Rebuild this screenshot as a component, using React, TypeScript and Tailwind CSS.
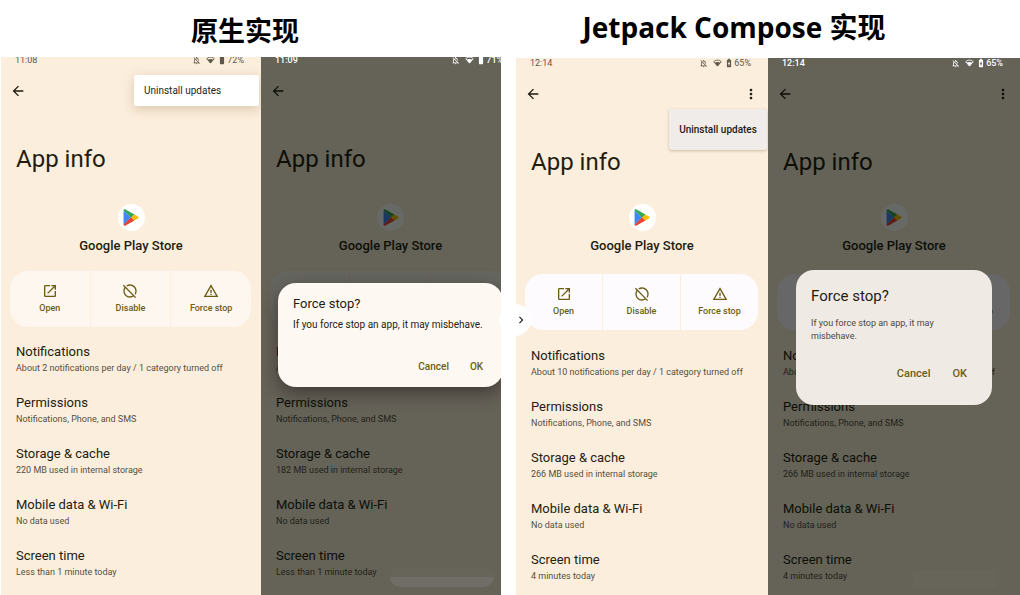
import React from "react";
import {
  MdArrowBack,
  MdBatteryChargingFull,
  MdBatteryFull,
  MdChevronRight,
  MdHideSource,
  MdMoreVert,
  MdOpenInNew,
  MdOutlineNotificationsOff,
  MdWarningAmber,
} from "react-icons/md";

type Variant = "native" | "compose";

interface ScreenProps {
  variant: Variant;
  time: string;
  battery: string;
  notifications: string;
  storage: string;
  screenTime: string;
  dimmed?: boolean;
  showMore?: boolean;
}

function WifiIcon() {
  return (
    <svg viewBox="0 0 24 20" className="h-2 w-[9px]" aria-hidden="true">
      <path d="M12 18 2 6.500C7.500 1 16.500 1 22 6.500Z" fill="none" stroke="currentColor" strokeWidth="2.500" />
      <path d="M12 19.500 4.500 9.500C8.500 6.500 15.500 6.500 19.500 9.500Z" fill="currentColor" />
    </svg>
  );
}

function PlayLogo() {
  return (
    <span className="flex size-[27px] items-center justify-center rounded-full bg-white">
      <svg viewBox="0 0 30 32" className="h-[17px] w-4" aria-hidden="true">
        <path d="M1 3C1 .8 2.800-.2 4.800.8L21.500 10.500 15 17 1 3Z" fill="#34a853" />
        <path d="M1 29C1 31.200 2.800 32.200 4.800 31.200L21.500 21.500 15 15 1.500 28Z" fill="#ea4335" />
        <path d="M21 10.200 28 14.300C29.600 15.300 29.600 16.700 28 17.700L21 21.800 15 16Z" fill="#fbbc04" />
        <path d="M1 3V29L14.500 16Z" fill="#4285f4" />
      </svg>
    </span>
  );
}

function StatusBar({ variant, time, battery, dimmed }: Pick<ScreenProps, "variant" | "time" | "battery" | "dimmed">) {
  const offset = variant === "native" ? "-mt-1" : "-mt-0.5";
  const tone = dimmed ? "text-white font-medium" : "text-[#5f594b]";
  return (
    <div className={`relative z-10 flex h-[14px] items-center pl-[14px] pr-[17px] text-[9px] leading-[14px] ${offset} ${tone}`}>
      <span className="grow">{time}</span>
      <MdOutlineNotificationsOff className="mr-[5px] size-[9px]" />
      <WifiIcon />
      {variant === "native" ? (
        <MdBatteryFull className="ml-[2px] size-[10px]" />
      ) : (
        <MdBatteryChargingFull className="ml-[2px] size-[10px]" />
      )}
      <span>{battery}</span>
    </div>
  );
}

function Actions({ variant }: { variant: Variant }) {
  const fill = variant === "native" ? "bg-[#fef7f0]" : "bg-[#fefbff]";
  const items = [
    { label: "Open", Icon: MdOpenInNew },
    { label: "Disable", Icon: MdHideSource },
    { label: "Force stop", Icon: MdWarningAmber },
  ];
  return (
    <div className="ml-[9px] mr-[10px] grid grid-cols-3 gap-px overflow-hidden rounded-[18px]">
      {items.map(({ label, Icon }) => (
        <button key={label} type="button" className={`flex h-14 flex-col items-center pt-3 text-[#6b5d14] ${fill}`}>
          <Icon className="size-4" />
          <span className="mt-0.5 text-[9px] font-medium leading-[14px]">{label}</span>
        </button>
      ))}
    </div>
  );
}

function AppInfo(props: ScreenProps) {
  const { variant, dimmed, showMore } = props;
  const native = variant === "native";
  const rows = [
    ["Notifications", props.notifications],
    ["Permissions", "Notifications, Phone, and SMS"],
    ["Storage & cache", props.storage],
    ["Mobile data & Wi-Fi", "No data used"],
    ["Screen time", props.screenTime],
  ];
  return (
    <>
      <StatusBar {...props} />
      <div className="flex h-12 items-center justify-between px-[9px] text-[#1f1b10]">
        <button type="button" aria-label="Back">
          <MdArrowBack className="size-4" />
        </button>
        {showMore && (
          <button type="button" aria-label="More options">
            <MdMoreVert className="size-4" />
          </button>
        )}
      </div>
      <h2 className="mt-7 pl-[15px] text-2xl leading-8 text-[#231d10]">App info</h2>
      <div className={`flex flex-col items-center ${native ? "mt-[29px]" : "mt-[26px]"}`}>
        <PlayLogo />
        <h3 className="mt-[5px] text-[13px] font-medium leading-5 text-[#231d10]">Google Play Store</h3>
      </div>
      <div className={native ? "mt-[15px]" : "mt-[18px]"}>
        <Actions variant={variant} />
      </div>
      <ul className={`flex flex-col gap-[19px] pl-[15px] ${native ? "mt-4" : "mt-[17px]"}`}>
        {rows.map(([title, detail]) => (
          <li key={title}>
            <p className="text-[13px] leading-[18px] text-[#231d10]">{title}</p>
            <p className="whitespace-nowrap text-[9px] leading-[14px] text-[#554e3f]">{detail}</p>
          </li>
        ))}
      </ul>
      {dimmed && <div className="absolute inset-0 bg-[#000500]/60" />}
    </>
  );
}

function DialogButtons({ className }: { className: string }) {
  return (
    <div className={`flex justify-end font-medium leading-4 text-[#6b5d14] ${className}`}>
      <button type="button">Cancel</button>
      <button type="button">OK</button>
    </div>
  );
}

export default function App() {
  return (
    <main className="grid min-h-screen grid-cols-[501fr_504fr] gap-x-[15px] overflow-hidden bg-white font-['Roboto','Noto_Sans_CJK_SC',sans-serif]">
      <section className="flex flex-col">
        <h1 className="h-[57px] pr-[11px] pt-[10px] text-center font-['Noto_Sans_CJK_SC',sans-serif] text-[27px] font-bold leading-10 text-black">
          原生实现
        </h1>
        <div className="grid grow grid-cols-[260fr_240fr] pl-px">
          <div className="relative overflow-hidden bg-[#fceedc]">
            <AppInfo
              variant="native"
              time="11:08"
              battery="72%"
              notifications="About 2 notifications per day / 1 category turned off"
              storage="220 MB used in internal storage"
              screenTime="Less than 1 minute today"
            />
            <div role="menu" className="absolute right-[2px] top-[18px] w-[125px] rounded-[2px] bg-white shadow-[0_3px_12px_rgba(90,60,20,0.22)]">
              <button type="button" role="menuitem" className="h-[31px] pl-[10px] text-[10px] leading-4 text-[#1e1e1e]">
                Uninstall updates
              </button>
            </div>
          </div>
          <div className="relative overflow-hidden bg-[#fceedc]">
            <div className="relative flex h-full w-[108%] flex-col">
              <AppInfo
                variant="native"
                time="11:09"
                battery="71%"
                notifications="About 2 notifications per day / 1 category turned off"
                storage="182 MB used in internal storage"
                screenTime="Less than 1 minute today"
                dimmed
              />
              <div
                role="dialog"
                aria-label="Force stop?"
                className="absolute inset-x-[17px] top-[226px] rounded-[18px] bg-[#fef8f2] px-[15px] pb-3 pt-[11px] shadow-[0_6px_18px_rgba(40,30,30,0.6)]"
              >
                <h4 className="text-[13px] leading-5 text-[#231d10]">Force stop?</h4>
                <p className="mt-[3px] whitespace-nowrap text-[10px] leading-4 text-[#231d10]">
                  If you force stop an app, it may misbehave.
                </p>
                <DialogButtons className="mt-[26px] gap-[21px] pr-[5px] text-[10px]" />
              </div>
            </div>
            <div className="absolute bottom-2 right-[7px] h-5 w-[104px] overflow-hidden rounded-[10px] bg-[#67645a]">
              <div className="mt-[10px] h-[10px] bg-[#706d66]" />
            </div>
          </div>
        </div>
      </section>

      <section className="relative flex flex-col">
        <h1 className="h-[58px] pr-[68px] pt-[7px] text-center font-['Open_Sans','Noto_Sans_CJK_SC',sans-serif] text-[28px] font-bold leading-10 text-black">
          Jetpack Compose 实现
        </h1>
        <div className="grid grow grid-cols-2">
          <div className="relative overflow-hidden bg-[#fceedc]">
            <AppInfo
              variant="compose"
              time="12:14"
              battery="65%"
              notifications="About 10 notifications per day / 1 category turned off"
              storage="266 MB used in internal storage"
              screenTime="4 minutes today"
              showMore
            />
            <div role="menu" className="absolute right-px top-[51px] w-[98px] rounded-[3px] bg-[#f0ece9] shadow-[0_1px_3px_rgba(60,40,20,0.25)]">
              <button type="button" role="menuitem" className="h-[41px] w-full whitespace-nowrap text-[10px] font-medium leading-4 text-[#1f1b16]">
                Uninstall updates
              </button>
            </div>
          </div>
          <div className="relative overflow-hidden bg-[#fceedc]">
            <AppInfo
              variant="compose"
              time="12:14"
              battery="65%"
              notifications="About 10 notifications per day / 1 category turned off"
              storage="266 MB used in internal storage"
              screenTime="4 minutes today"
              showMore
              dimmed
            />
            <div
              role="dialog"
              aria-label="Force stop?"
              className="absolute inset-x-7 top-[212px] rounded-[18px] bg-[#f0eae4] px-[15px] pb-[23px] pt-4"
            >
              <h4 className="text-[15px] leading-5 text-[#1f1b16]">Force stop?</h4>
              <p className="mt-[11px] max-w-[140px] text-[9px] leading-[13px] text-[#4d483c]">
                If you force stop an app, it may misbehave.
              </p>
              <DialogButtons className="mt-[23px] gap-[22px] pr-[10px] text-[11px]" />
            </div>
            <div className="absolute bottom-[6px] right-6 h-[19px] w-[83px] bg-[#69665c]/60" />
          </div>
        </div>
        <button
          type="button"
          aria-label="Next"
          className="absolute -left-[17px] top-[304px] flex size-8 items-center justify-end rounded-full bg-white pr-[3px] text-[#222222]"
        >
          <MdChevronRight className="size-[14px]" />
        </button>
      </section>
    </main>
  );
}
